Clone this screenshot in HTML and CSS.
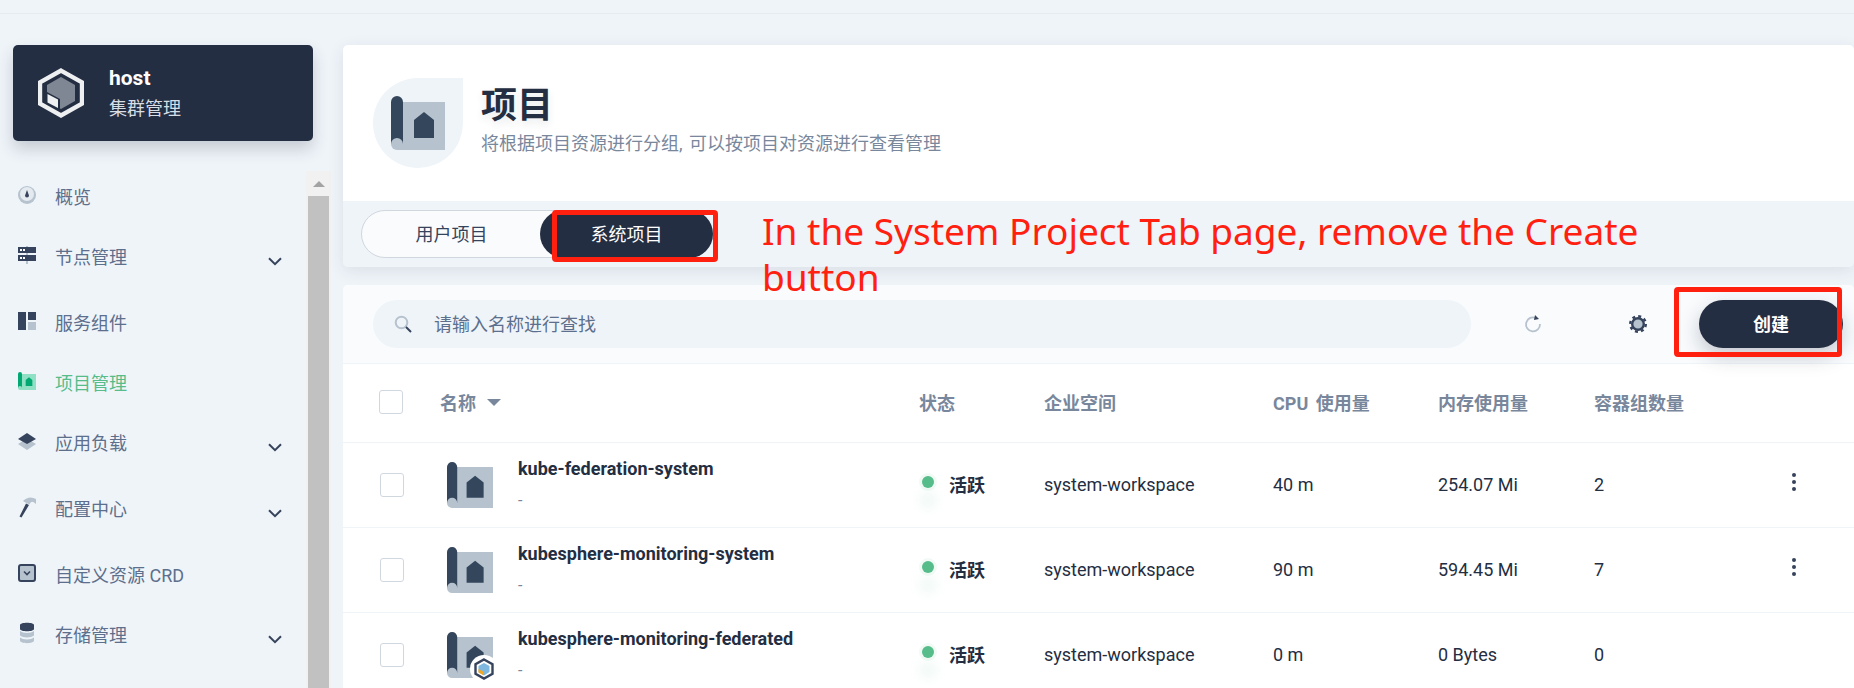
FILE: index.html
```html
<!DOCTYPE html>
<html lang="zh">
<head>
<meta charset="utf-8">
<title>项目</title>
<link rel="stylesheet" href="styles.css">
</head>
<body>
<svg class="defs" width="0" height="0" aria-hidden="true">
  <symbol id="project" viewBox="0 0 54 54">
    <path class="p-light" d="M6 6H54V54H6a6 6 0 0 1-6-6V12z"/>
    <path class="p-dark" d="M0 6a6 6 0 0 1 12 0V48a6 6 0 0 0-12 0z"/>
    <path class="p-dark" d="M23 24L33 16L43 24V42H23z"/>
  </symbol>
  <symbol id="chev" viewBox="0 0 14 9">
    <path d="M1 1.2L7 7.2L13 1.2" fill="none" stroke="#36435c" stroke-width="2"/>
  </symbol>
</svg>

<div class="topbar"></div>
<div class="layout">
  <aside class="sidebar">
    <div class="cluster">
      <svg class="cluster-logo" viewBox="0 0 46 50">
        <path d="M23 2.6L44 14.4V35.6L23 47.4L2 35.6V14.4z" fill="none" stroke="#eeeff1" stroke-width="4.4"/>
        <path d="M23 9L37 17V33L23 41L9 33V17z" fill="#7f8794"/>
        <path d="M9 24L22 31V42L9 35z" fill="#242e42"/>
        <path d="M9.500 26L20 31.500V40L9.500 34.500z" fill="#eeeff1"/>
      </svg>
      <div class="cluster-text">
        <div class="cluster-name">host</div>
        <div class="cluster-sub">集群管理</div>
      </div>
    </div>
    <div class="nav-wrap">
      <nav class="nav">
        <div class="nav-item">
          <svg class="nav-icon" viewBox="0 0 18 18"><circle cx="9" cy="9" r="9" fill="#b6c2cd"/><circle cx="9" cy="8" r="7" fill="#e4eaf0"/><path d="M9 4L11 9.500a2 2 0 1 1-4 0z" fill="#36435c"/></svg>
          <span>概览</span>
        </div>
        <div class="nav-item has-sub">
          <svg class="nav-icon" viewBox="0 0 18 18"><rect x="8" y="0" width="2" height="18" fill="#b6c2cd"/><rect y="1" width="18" height="6" fill="#36435c"/><rect y="9" width="18" height="6" fill="#36435c"/><rect x="2" y="3" width="2" height="2" fill="#fff"/><rect x="5" y="3" width="2" height="2" fill="#fff"/><rect x="2" y="11" width="2" height="2" fill="#fff"/><rect x="5" y="11" width="2" height="2" fill="#fff"/></svg>
          <span>节点管理</span>
          <svg class="chev"><use href="#chev"/></svg>
        </div>
        <div class="nav-item">
          <svg class="nav-icon" viewBox="0 0 18 18"><rect width="8" height="18" fill="#36435c"/><rect x="10" width="8" height="8" fill="#36435c"/><rect x="10" y="10" width="8" height="8" fill="#b6c2cd"/></svg>
          <span>服务组件</span>
        </div>
        <div class="nav-item active">
          <svg class="nav-icon"><use href="#project"/></svg>
          <span>项目管理</span>
        </div>
        <div class="nav-item has-sub">
          <svg class="nav-icon" viewBox="0 0 18 18"><path d="M0 12L5 9L9 11L13 9L18 12L9 18z" fill="#b6c2cd"/><path d="M9 1L18 7L9 12L0 7z" fill="#36435c"/></svg>
          <span>应用负载</span>
          <svg class="chev"><use href="#chev"/></svg>
        </div>
        <div class="nav-item has-sub">
          <svg class="nav-icon" viewBox="0 0 18 18"><path d="M1.500 18.500L8 5.500L11 7L3.500 19.500z" fill="#36435c"/><path d="M5 3Q11-3 18 1V6Q13 1.500 11.500 6.500L7.500 4.500z" fill="#b6c2cd"/></svg>
          <span>配置中心</span>
          <svg class="chev"><use href="#chev"/></svg>
        </div>
        <div class="nav-item">
          <svg class="nav-icon" viewBox="0 0 18 18"><rect x="1" y="1" width="16" height="16" rx="2" fill="#b6c2cd" stroke="#36435c" stroke-width="2"/><path d="M6 7.500L9 10.500L12 7.500" fill="none" stroke="#36435c" stroke-width="1.600"/></svg>
          <span>自定义资源 CRD</span>
        </div>
        <div class="nav-item has-sub">
          <svg class="nav-icon" viewBox="0 0 18 18"><path d="M2 1C2-2 16-2 16 1V5C16 8 2 8 2 5z" fill="#36435c"/><path d="M2 7C5 9.500 13 9.500 16 7V11.500C13 14 5 14 2 11.500z" fill="#b6c2cd"/><path d="M2 13.500C5 16 13 16 16 13.500V16.500C16 20 2 20 2 16.500z" fill="#b6c2cd"/></svg>
          <span>存储管理</span>
          <svg class="chev"><use href="#chev"/></svg>
        </div>
      </nav>
      <div class="scrollbar">
        <div class="scroll-up"><span class="scroll-arrow"></span></div>
        <div class="scroll-thumb"></div>
      </div>
    </div>
  </aside>

  <main class="main">
    <section class="head-card">
      <div class="head-info">
        <div class="drop"><svg class="drop-icon"><use href="#project"/></svg></div>
        <div class="head-text">
          <h1 class="title">项目</h1>
          <p class="desc">将根据项目资源进行分组, 可以按项目对资源进行查看管理</p>
        </div>
      </div>
      <div class="tab-bar">
        <div class="tabs">
          <div class="tab">用户项目</div>
          <div class="tab tab-on">系统项目</div>
        </div>
      </div>
    </section>

    <section class="list-card">
      <div class="toolbar">
        <div class="search">
          <svg class="search-icon" viewBox="0 0 18 18"><circle cx="7.500" cy="7.500" r="5.800" fill="none" stroke="#b6c2cd" stroke-width="2"/><path d="M12 12L17 17" stroke="#36435c" stroke-width="2"/></svg>
          <span class="search-text">请输入名称进行查找</span>
        </div>
        <svg class="refresh" viewBox="0 0 18 18"><path d="M11.500 2.800A7 7 0 1 0 16 9" fill="none" stroke="#b6c2cd" stroke-width="1.800"/><path d="M11 0L15 4L10 5z" fill="#36435c"/></svg>
        <svg class="gear" viewBox="0 0 18 18"><circle cx="9" cy="9" r="7.800" fill="none" stroke="#36435c" stroke-width="2.400" stroke-dasharray="3 3.120"/><circle cx="9" cy="9" r="5.800" fill="#b6c2cd" stroke="#36435c" stroke-width="2.400"/></svg>
        <button class="create">创建</button>
      </div>

      <div class="row row-head">
        <div><span class="check check-head"></span></div>
        <div class="sort">名称<span class="tri"></span></div>
        <div>状态</div>
        <div>企业空间</div>
        <div>CPU 使用量</div>
        <div>内存使用量</div>
        <div>容器组数量</div>
      </div>

      <div class="row">
        <div><span class="check"></span></div>
        <div class="name-cell">
          <span class="pic"><svg class="pic-svg"><use href="#project"/></svg></span>
          <div><div class="name">kube-federation-system</div><div class="sub">-</div></div>
        </div>
        <div class="status"><span class="dot"></span><b>活跃</b></div>
        <div>system-workspace</div>
        <div>40 m</div>
        <div>254.07 Mi</div>
        <div class="last"><span>2</span><span class="more"><i></i><i></i><i></i></span></div>
      </div>

      <div class="row">
        <div><span class="check"></span></div>
        <div class="name-cell">
          <span class="pic"><svg class="pic-svg"><use href="#project"/></svg></span>
          <div><div class="name">kubesphere-monitoring-system</div><div class="sub">-</div></div>
        </div>
        <div class="status"><span class="dot"></span><b>活跃</b></div>
        <div>system-workspace</div>
        <div>90 m</div>
        <div>594.45 Mi</div>
        <div class="last"><span>7</span><span class="more"><i></i><i></i><i></i></span></div>
      </div>

      <div class="row">
        <div><span class="check"></span></div>
        <div class="name-cell">
          <span class="pic"><svg class="pic-svg"><use href="#project"/></svg>
            <svg class="badge" viewBox="0 0 28 28"><circle cx="14" cy="14" r="14" fill="#fff"/><path d="M14 4.500L22.500 9.300V18.700L14 23.500L5.500 18.700V9.300z" fill="#fff" stroke="#36435c" stroke-width="2.400"/><path d="M14 8L19.500 11V17L14 20.500L8.500 17V11z" fill="#7eb8de"/><path d="M8.500 14L13 16.500V20L8.500 17.500z" fill="#f5a623"/></svg>
          </span>
          <div><div class="name">kubesphere-monitoring-federated</div><div class="sub">-</div></div>
        </div>
        <div class="status"><span class="dot"></span><b>活跃</b></div>
        <div>system-workspace</div>
        <div>0 m</div>
        <div>0 Bytes</div>
        <div class="last"><span>0</span></div>
      </div>
    </section>
  </main>
</div>

<div class="mark mark-tab"></div>
<div class="mark mark-create"></div>
<p class="note">In the System Project Tab page, remove the Create button</p>
</body>
</html>
```
FILE: styles.css
```css
html, body {
  margin: 0;
  height: 688px;
  overflow: hidden;
  background: #eff4f9;
  font-family: Roboto, "Noto Sans CJK SC", sans-serif;
  color: #242e42;
}
.defs { position: absolute; }
.p-light { fill: var(--pl, #b6c2cd); }
.p-dark { fill: var(--pd, #34465c); }

.topbar { height: 13px; border-bottom: 1px solid #e6ebf0; }
.layout { display: flex; height: 674px; }

/* sidebar */
.sidebar { width: 343px; flex: none; padding-top: 31px; box-sizing: border-box; }
.cluster {
  margin-left: 13px;
  width: 300px;
  height: 96px;
  box-sizing: border-box;
  padding-left: 25px;
  display: flex;
  align-items: center;
  gap: 25px;
  background: #242e42;
  border-radius: 5px;
  box-shadow: 0 8px 16px rgba(36, 46, 66, .2);
}
.cluster-logo { width: 46px; height: 50px; flex: none; }
.cluster-text { color: #fff; }
.cluster-name { font-size: 21px; font-weight: 700; line-height: 28px; }
.cluster-sub { font-size: 18px; line-height: 28px; margin-top: 3px; color: #d8dee5; }

.nav-wrap { display: flex; margin-top: 26px; height: 521px; }
.nav { width: 306px; flex: none; }
.nav-item {
  height: 60px;
  display: flex;
  align-items: center;
  padding: 0 24px 0 18px;
  gap: 19px;
  font-size: 18px;
  color: #5c6f8c;
}
.has-sub { margin-bottom: 6px; }
.nav-icon { width: 18px; height: 18px; flex: none; margin-top: -4px; overflow: visible; }
.nav-item span { margin-top: -2px; }
.chev { width: 14px; height: 9px; margin-left: auto; margin-top: 8px; }
.active { color: #55bc8a; --pl: #90e0c5; --pd: #00a971; }

.scrollbar { width: 25px; margin-top: 4px; display: flex; flex-direction: column; background: #f1f1f1; }
.scroll-up { height: 25px; display: flex; align-items: center; justify-content: center; }
.scroll-arrow { border: 6px solid transparent; border-top: 0; border-bottom: 6px solid #a3a3a3; }
.scroll-thumb { flex: 1; margin: 0 2px; background: #c1c1c1; }

/* main */
.main { flex: 1; min-width: 0; padding-top: 31px; }
.head-card {
  border-radius: 5px;
  box-shadow: 0 4px 16px rgba(36, 46, 66, .1);
}
.head-info {
  height: 156px;
  box-sizing: border-box;
  padding-left: 30px;
  display: flex;
  align-items: center;
  gap: 18px;
  background: #fff;
  border-radius: 5px 5px 0 0;
}
.drop {
  width: 90px;
  height: 90px;
  display: flex;
  align-items: center;
  justify-content: center;
  background: #eff4f9;
  border-radius: 50% 0 50% 50%;
}
.drop-icon { width: 54px; height: 54px; }
.head-text { margin-top: -7px; }
.title {
  margin: 0;
  font-size: 36px;
  font-weight: 700;
  line-height: 48px;
  text-shadow: 0 4px 8px rgba(36, 46, 66, .1);
}
.desc { margin: 0; font-size: 18px; line-height: 28px; color: #79879c; word-spacing: 2px; }

.tab-bar {
  height: 66px;
  box-sizing: border-box;
  padding: 9px 0 0 18px;
  background: #eff4f9;
  border-radius: 0 0 5px 5px;
}
.tabs {
  width: 352px;
  height: 48px;
  box-sizing: border-box;
  display: flex;
  background: #f9fbfd;
  border: 1px solid #d1d7df;
  border-radius: 24px;
}
.tab {
  flex: 1;
  display: flex;
  align-items: center;
  justify-content: center;
  padding-bottom: 2px;
  box-sizing: border-box;
  font-size: 18px;
  color: #36435c;
  border-radius: 24px;
}
.tab-on { flex: none; width: 173px; margin: -1px; background: #242e42; color: #fff; }

.list-card { margin-top: 18px; background: #fff; border-radius: 5px 5px 0 0; }
.toolbar {
  height: 79px;
  box-sizing: border-box;
  padding: 0 11px 1px 30px;
  display: flex;
  align-items: center;
  background: #f9fbfd;
  border-bottom: 1px solid #eff4f9;
  border-radius: 5px 5px 0 0;
}
.search {
  width: 1098px;
  height: 48px;
  box-sizing: border-box;
  padding-left: 21px;
  display: flex;
  align-items: center;
  gap: 22px;
  background: #eff4f9;
  border-radius: 24px;
  font-size: 18px;
  color: #5c6f8c;
}
.search-icon { width: 18px; height: 18px; }
.search-text { margin-top: -2px; }
.refresh { width: 18px; height: 18px; margin-left: 53px; }
.gear { width: 18px; height: 18px; margin-left: 87px; }
.create {
  width: 144px;
  height: 48px;
  margin-left: 52px;
  padding: 0 0 2px;
  border: 0;
  border-radius: 24px;
  background: #242e42;
  color: #fff;
  font: 700 18px Roboto, "Noto Sans CJK SC", sans-serif;
  box-shadow: 0 8px 20px rgba(36, 46, 66, .25);
}

/* table */
.row {
  height: 85px;
  box-sizing: border-box;
  padding-bottom: 2px;
  display: grid;
  grid-template-columns: 97px 479px 125px 229px 165px 156px 1fr;
  align-items: center;
  border-bottom: 1px solid #eff4f9;
  font-size: 18px;
  color: #242e42;
}
.row-head {
  height: 79px;
  font-weight: 700;
  word-spacing: 3px;
  color: #79879c;
}
.check {
  display: block;
  width: 24px;
  height: 24px;
  box-sizing: border-box;
  margin: 2px 0 0 37px;
  background: #fff;
  border: 1px solid #d1d7df;
  border-radius: 3px;
}
.check-head { margin: 0 0 0 36px; }
.sort { display: flex; align-items: center; gap: 11px; }
.tri { border: 7px solid transparent; border-top: 7px solid #79879c; border-bottom: 0; }

.name-cell { display: flex; align-items: center; margin-top: 2px; padding-left: 7px; gap: 25px; }
.pic { position: relative; width: 46px; height: 46px; flex: none; }
.pic-svg { display: block; width: 46px; height: 46px; }
.badge { position: absolute; left: 23px; top: 23px; width: 28px; height: 28px; }
.name { font-weight: 700; line-height: 24px; }
.sub { font-size: 16px; line-height: 24px; margin-top: 8px; color: #79879c; }

.status { display: flex; align-items: center; gap: 15px; padding-left: 3px; }
.status b { font-weight: 700; }
.dot {
  width: 12px;
  height: 12px;
  margin-top: -4px;
  background: #55bc8a;
  border-radius: 50%;
  box-shadow: 0 0 0 3px rgba(85, 188, 138, .08), 0 18px 14px rgba(85, 188, 138, .2);
}
.last { display: flex; align-items: center; justify-content: space-between; padding-right: 58px; }
.more { display: flex; flex-direction: column; gap: 3px; margin-top: -4px; }
.more i { display: block; width: 4px; height: 4px; border-radius: 50%; background: #36435c; }

/* red review annotations lying over the page */
.mark { position: absolute; box-sizing: border-box; border: 5px solid #ff2010; border-radius: 4px; }
.mark-tab { left: 552px; top: 210px; width: 166px; height: 52px; }
.mark-create { left: 1674px; top: 287px; width: 168px; height: 70px; }
.note {
  position: absolute;
  left: 762px;
  top: 208px;
  width: 910px;
  margin: 0;
  font-family: "Noto Sans", sans-serif;
  font-size: 37px;
  line-height: 46px;
  color: #ff2010;
}
```
